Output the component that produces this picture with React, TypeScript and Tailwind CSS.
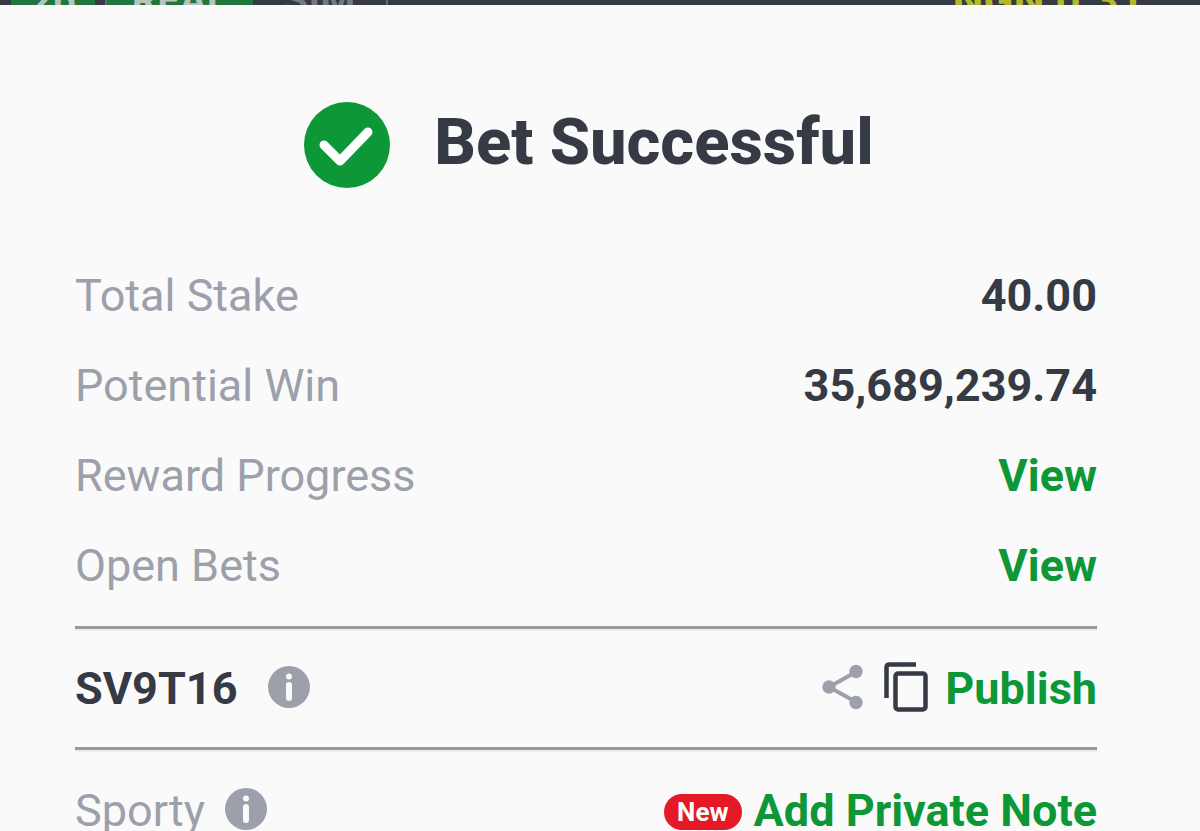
import React from "react";

const InfoIcon = () => (
  <svg viewBox="0 0 42 42" className="size-[42px] fill-[#9ca0ab]">
    <circle cx="21" cy="21" r="21" />
    <circle cx="21" cy="10.5" r="3" className="fill-[#fafafa]" />
    <rect x="18" y="16" width="6" height="19" rx="3" className="fill-[#fafafa]" />
  </svg>
);

const CheckIcon = () => (
  <svg viewBox="0 0 86 86" className="size-[86px] shrink-0">
    <circle cx="43" cy="43" r="43" fill="#0d9737" />
    <path
      d="M20 43L36 59L64 30"
      fill="none"
      stroke="#fff"
      strokeWidth="9"
      strokeLinecap="round"
      strokeLinejoin="round"
    />
  </svg>
);

const ShareIcon = () => (
  <svg viewBox="0 0 42 46" className="h-[46px] w-[42px]">
    <path d="M34 8L7 23L34 38" fill="none" stroke="#9ca0ab" strokeWidth="4" />
    <g fill="#9ca0ab">
      <circle cx="34" cy="7.5" r="6.7" />
      <circle cx="7" cy="23" r="6.7" />
      <circle cx="34" cy="38.5" r="6.7" />
    </g>
  </svg>
);

const CopyIcon = () => (
  <svg viewBox="0 0 44 50" className="h-[50px] w-[44px]" fill="none" stroke="#353a45" strokeWidth="4.5">
    <path d="M2.5 36V5.5Q2.5 2.5 5.5 2.5H32" />
    <rect x="11.5" y="11.5" width="30" height="36" rx="2.5" />
  </svg>
);

const Divider = () => (
  <hr className="h-[5px] border-0 border-t-[3px] border-[#98999c] bg-[#ebecf1]" />
);

const Row = ({ label, children }: { label: string; children: React.ReactNode }) => {
  return (
    <div className="flex h-[90px] items-center justify-between">
      <span className="text-[#9ca0ab]">{label}</span>
      {children}
    </div>
  );
};

const App = () => {
  return (
    <div className="h-screen overflow-hidden bg-[#fafafa] font-[Roboto,sans-serif] text-[45px] leading-[54px] text-[#353a45]">
      <header className="flex h-[5px] items-center justify-between overflow-hidden bg-[#353a45] pr-[56px] pb-[4px] pl-[11px] text-[40px] leading-[40px] font-bold">
        <div className="flex items-center text-[#b5c4bd]">
          <span className="w-[84px] bg-[#20763c] text-center">26</span>
          <div className="ml-[10px] flex border-x-2 border-[#646975]">
            <button type="button" className="w-[146px] bg-[#20763c]">REAL</button>
            <button type="button" className="w-[133px] text-[#747985]">SIM</button>
          </div>
        </div>
        <span className="text-[44px] text-[#b3b82b]">NGN 0.31</span>
      </header>

      <main className="pr-[103px] pl-[75px]">
        <div className="flex items-center justify-center gap-[44px] pt-[97px] pb-[63px] pl-[6px]">
          <CheckIcon />
          <h1 className="pb-[6px] text-[65px] leading-[76px] font-extrabold">Bet Successful</h1>
        </div>

        <Row label="Total Stake">
          <span className="font-bold">40.00</span>
        </Row>
        <Row label="Potential Win">
          <span className="font-bold">35,689,239.74</span>
        </Row>
        <Row label="Reward Progress">
          <a href="#rewards" className="font-bold text-[#0d9737]">View</a>
        </Row>
        <Row label="Open Bets">
          <a href="#bets" className="font-bold text-[#0d9737]">View</a>
        </Row>

        <div className="pt-[15px]">
          <Divider />
        </div>

        <div className="flex h-[116px] items-center justify-between">
          <div className="flex items-center gap-[31px]">
            <span className="font-bold">SV9T16</span>
            <button type="button" aria-label="Code info" className="pb-[4px]">
              <InfoIcon />
            </button>
          </div>
          <div className="flex items-center">
            <button type="button" aria-label="Share" className="mr-[20px] pb-[4px]">
              <ShareIcon />
            </button>
            <button type="button" aria-label="Copy code" className="mr-[17px] pb-[4px]">
              <CopyIcon />
            </button>
            <button type="button" className="font-bold text-[#0d9737]">Publish</button>
          </div>
        </div>

        <Divider />

        <div className="flex h-[118px] items-center justify-between">
          <div className="flex items-center gap-[20px]">
            <span className="text-[#9ca0ab]">Sporty</span>
            <button type="button" aria-label="Sporty info" className="pb-[4px]">
              <InfoIcon />
            </button>
          </div>
          <div className="flex items-center gap-[12px]">
            <span className="mt-[2px] rounded-full bg-[#e41827] px-[13px] text-[26px] leading-[36px] font-bold text-white">
              New
            </span>
            <button type="button" className="font-bold text-[#0d9737]">Add Private Note</button>
          </div>
        </div>
      </main>
    </div>
  );
};

export default App;
